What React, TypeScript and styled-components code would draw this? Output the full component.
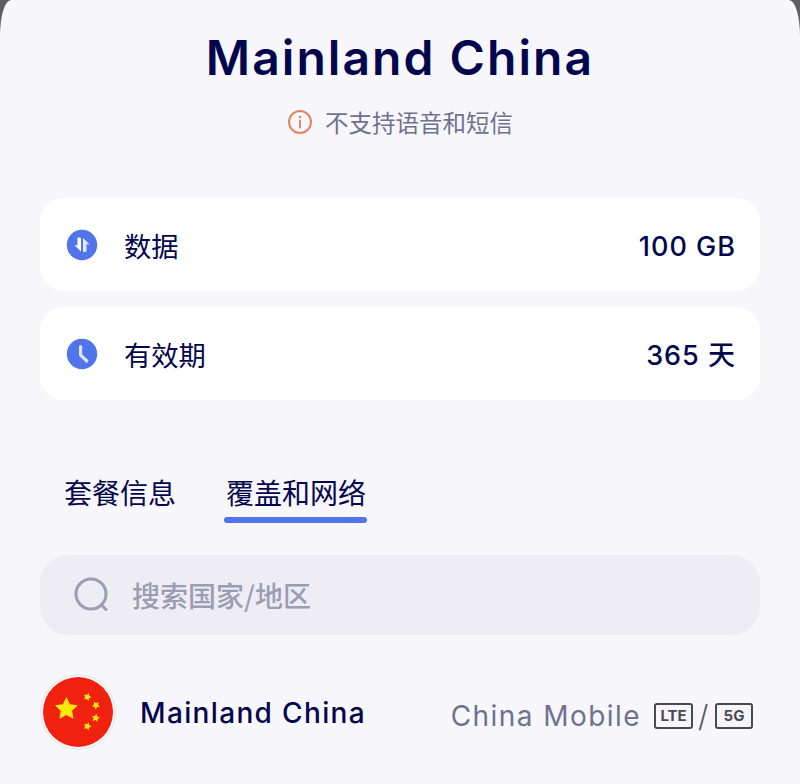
import React from "react";
import styled, { createGlobalStyle } from "styled-components";

const Global = createGlobalStyle`
  html, body { margin: 0; padding: 0; background: #5f5f60; }
  #root { width: 800px; height: 784px; overflow: hidden; }
`;

const FONT = `Inter, "Noto Sans CJK SC", sans-serif`;
const CJK = `"Noto Sans CJK SC", sans-serif`;

const Sheet = styled.main`
  box-sizing: border-box;
  width: 800px;
  height: 784px;
  background: #f7f7fb;
  border-radius: 11px 11px 0 0 / 36px 36px 0 0;
  padding: 0 40px;
  display: flex;
  flex-direction: column;
  overflow: hidden;
`;
const Title = styled.h1`
  margin: 29px 0 0;
  height: 58px;
  text-align: center;
  font: 600 48px/58px ${FONT};
  letter-spacing: 2.05px;
  color: #03064d;
`;
const Notice = styled.div`
  margin-top: 20px;
  height: 32px;
  display: flex;
  align-items: center;
  justify-content: center;
  gap: 12px;
  font: 400 23.5px/32px ${CJK};
  color: #6f7190;
  & > svg { margin-top: -2px; }
  & > span { margin-top: -2px; }
`;
const InfoCard = styled.section<{ $top: number }>`
  height: 93px;
  margin-top: ${(p) => p.$top}px;
  background: #ffffff;
  border-radius: 24px;
  padding: 0 24px 0 26px;
  display: flex;
  align-items: center;
  color: #03064d;
`;
const CardIcon = styled.svg`
  width: 32px;
  height: 32px;
  flex: none;
`;
const CardLabel = styled.span`
  margin-left: 26px;
  flex: 1;
  font: 400 27.3px/36px ${CJK};
`;
const CardValue = styled.span`
  padding-top: 4px;
  font: 500 27px/36px ${FONT};
  letter-spacing: 1px;
`;
const Tabs = styled.nav`
  margin-top: 70px;
  padding-left: 24px;
  display: flex;
  gap: 50px;
`;
const Tab = styled.div<{ $active?: boolean }>`
  position: relative;
  height: 44px;
  font: 400 28px/44px ${CJK};
  color: #03064d;
  &::after {
    content: "";
    display: ${(p) => (p.$active ? "block" : "none")};
    position: absolute;
    left: -2px;
    right: -1px;
    bottom: -9px;
    height: 6px;
    border-radius: 3px;
    background: #5274ea;
  }
`;
const Search = styled.div`
  margin-top: 41px;
  height: 80px;
  border-radius: 28px;
  background: #ededf3;
  padding-left: 33px;
  display: flex;
  align-items: center;
  gap: 21px;
  font: 500 28px/40px ${CJK};
  color: #9c9db5;
`;
const CountryRow = styled.div`
  margin-top: 39px;
  display: flex;
  align-items: center;
`;
const Flag = styled.svg`
  width: 76px;
  height: 76px;
  flex: none;
`;
const CountryName = styled.span`
  margin-left: 24px;
  flex: 1;
  padding-top: 2px;
  font: 500 28px/36px ${FONT};
  letter-spacing: 1.35px;
  color: #03064d;
`;
const Carrier = styled.div`
  display: flex;
  align-items: center;
  padding: 8px 7px 0 0;
  font: 400 28px/36px ${FONT};
  letter-spacing: 1.45px;
  color: #6f7190;
`;
const Badge = styled.span<{ $width: number; $gap?: number }>`
  box-sizing: border-box;
  width: ${(p) => p.$width}px;
  height: 26px;
  margin-left: ${(p) => p.$gap ?? 0}px;
  border: 2px solid #4a4a55;
  border-radius: 3px;
  display: flex;
  align-items: center;
  justify-content: center;
  font: 700 15px/20px ${FONT};
  letter-spacing: 0;
  color: #4a4a55;
`;
const Slash = styled.span`
  margin: 0 5px;
  font: 300 30px/36px ${FONT};
  color: #55566e;
`;

const star = "M0 -1 L0.294 -0.405 L0.951 -0.309 L0.476 0.155 L0.588 0.809 L0 0.5 L-0.588 0.809 L-0.476 0.155 L-0.951 -0.309 L-0.294 -0.405 Z";

export default function App() {
  return (
    <>
      <Global />
      <Sheet>
        <Title>Mainland China</Title>
        <Notice>
          <svg width="26" height="26" viewBox="0 0 26 26" fill="none">
            <circle cx="13" cy="13" r="11" stroke="#e2855f" strokeWidth="2" />
            <circle cx="13" cy="8" r="1.3" fill="#e2855f" />
            <path d="M13 11.5V18.5" stroke="#e2855f" strokeWidth="2" strokeLinecap="round" />
          </svg>
          <span>不支持语音和短信</span>
        </Notice>
        <InfoCard $top={59}>
          <CardIcon viewBox="0 0 32 32">
            <circle cx="16" cy="16" r="15.2" fill="#5274ea" />
            <path d="M15 9.5V22.5L8.5 16.2H11.5V9.5Q11.5 8.5 12.5 8.5H14Q15 8.5 15 9.5Z" fill="#fff" />
            <path d="M17 22V9L23.5 15.3H20.5V22Q20.5 23 19.5 23H18Q17 23 17 22Z" fill="#dfe6fc" />
          </CardIcon>
          <CardLabel>数据</CardLabel>
          <CardValue>100 GB</CardValue>
        </InfoCard>
        <InfoCard $top={16}>
          <CardIcon viewBox="0 0 32 32">
            <circle cx="16" cy="16" r="15.2" fill="#5274ea" />
            <path d="M14.6 8.5V17.2L20.8 23" fill="none" stroke="#dbe3fb" strokeWidth="3.2" strokeLinecap="round" strokeLinejoin="round" />
          </CardIcon>
          <CardLabel>有效期</CardLabel>
          <CardValue>365 天</CardValue>
        </InfoCard>
        <Tabs>
          <Tab>套餐信息</Tab>
          <Tab $active>覆盖和网络</Tab>
        </Tabs>
        <Search>
          <svg width="38" height="38" viewBox="0 0 38 38" fill="none">
            <circle cx="18" cy="18" r="15" stroke="#9c9db5" strokeWidth="3" />
            <path d="M29.5 30L33 33.5" stroke="#9c9db5" strokeWidth="3" strokeLinecap="round" />
          </svg>
          搜索国家/地区
        </Search>
        <CountryRow>
          <Flag viewBox="0 0 76 76">
            <circle cx="38" cy="38" r="37" fill="#fff" stroke="#e9e9ee" strokeWidth="1.5" />
            <circle cx="38" cy="38" r="35" fill="#f1210f" />
            <g fill="#fbe90a">
              <path d={star} transform="translate(26.4 35) scale(12)" />
              <path d={star} transform="translate(47.4 23) rotate(20) scale(4.2)" />
              <path d={star} transform="translate(56 31.3) rotate(40) scale(4.2)" />
              <path d={star} transform="translate(55.7 44) rotate(10) scale(4.2)" />
              <path d={star} transform="translate(47.4 52.3) rotate(20) scale(4.2)" />
            </g>
          </Flag>
          <CountryName>Mainland China</CountryName>
          <Carrier>
            China Mobile
            <Badge $width={39} $gap={13}>LTE</Badge>
            <Slash>/</Slash>
            <Badge $width={38}>5G</Badge>
          </Carrier>
        </CountryRow>
      </Sheet>
    </>
  );
}
